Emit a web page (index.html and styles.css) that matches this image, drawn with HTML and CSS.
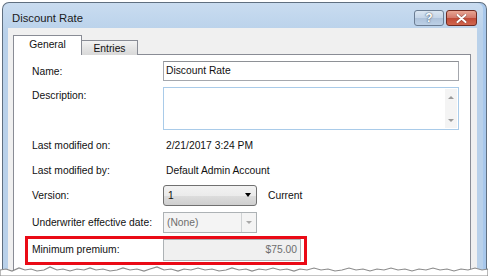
FILE: index.html
```html
<!DOCTYPE html>
<html lang="en">
<head>
  <meta charset="UTF-8" />
  <title>Discount Rate</title>
  <link rel="stylesheet" href="styles.css">
</head>
<body>
  <div class="window">
    <div class="titlebar">
      <span class="title">Discount Rate</span>
      <div class="caption-buttons">
        <div class="cap help">?</div>
        <div class="cap close">
          <svg width="11" height="9" viewBox="0 0 11 9">
            <path d="M1.5 1 L9.5 8 M9.5 1 L1.5 8" stroke="#5a2a22" stroke-width="3.2" stroke-linecap="round" opacity="0.45"/>
            <path d="M1.5 1 L9.5 8 M9.5 1 L1.5 8" stroke="#fff" stroke-width="2" stroke-linecap="round"/>
          </svg>
        </div>
      </div>
    </div>

    <div class="client">
      <div class="tabs">
        <div class="tab active">General</div>
        <div class="tab">Entries</div>
      </div>

      <div class="panel">
        <div class="row r-name">
          <span class="label">Name:</span>
          <div class="textbox wide">Discount Rate</div>
        </div>
        <div class="row r-desc">
          <span class="label">Description:</span>
          <div class="textarea">
            <div class="vscroll">
              <span class="arr up"></span>
              <span class="arr down"></span>
            </div>
          </div>
        </div>
        <div class="row r-on">
          <span class="label">Last modified on:</span>
          <span class="value">2/21/2017 3:24 PM</span>
        </div>
        <div class="row r-by">
          <span class="label">Last modified by:</span>
          <span class="value">Default Admin Account</span>
        </div>
        <div class="row">
          <span class="label">Version:</span>
          <div class="combo">
            <span>1</span>
            <span class="caret"></span>
          </div>
          <span class="note">Current</span>
        </div>
        <div class="row r-date">
          <span class="label">Underwriter effective date:</span>
          <div class="combo disabled">
            <span>(None)</span>
            <span class="drop"><span class="caret"></span></span>
          </div>
        </div>
        <div class="row r-min">
          <div class="highlight">
            <span class="label">Minimum premium:</span>
            <div class="textbox money">$75.00</div>
          </div>
        </div>
      </div>
    </div>
  </div>

  <svg class="torn" width="488" height="12" viewBox="0 0 488 12">
    <path d="M0,6 L6,5 L12,7 L19,4 L25,6 L31,5 L37,7 L44,6 L50,3 L57,6 L63,5 L70,7 L77,5 L84,6 L90,4 L96,6 L103,5 L110,7 L117,6 L123,4 L130,6 L137,5 L144,7 L150,5 L157,3 L164,6 L171,5 L178,7 L184,5 L191,6 L198,4 L205,6 L212,5 L219,7 L226,6 L232,4 L239,6 L246,5 L252,7 L259,5 L266,6 L273,4 L280,6 L287,5 L294,7 L300,5 L307,6 L314,4 L321,6 L328,5 L335,7 L342,6 L349,4 L356,6 L363,5 L370,7 L377,5 L384,6 L391,4 L398,6 L405,5 L412,7 L419,5 L426,6 L433,4 L440,6 L447,5 L454,7 L461,5 L468,6 L475,4 L482,6 L488,5 L488,12 L0,12 Z" fill="#fff" stroke="#8c8c8c" stroke-width="1.2"/>
  </svg>
</body>
</html>
```

FILE: styles.css
```css
html, body {
  margin: 0;
  height: 276px;
  overflow: hidden;
  background: #fff;
}
body {
  position: relative;
  font-family: 'Liberation Sans', Arial, sans-serif;
  font-size: 10.3px;
  color: #111;
}
.window {
  margin: 2px 0 0 2px;
  width: 483px;
  height: 273px;
  border: 1px solid #5f6f80;
  border-bottom: none;
  border-radius: 7px 7px 0 0;
  background: linear-gradient(#c9dcf0, #b9d1ea 30px, #b9d1ea);
  box-shadow: inset -3px 0 0 #a8c8ec, inset -1px 0 0 #d6e6f6;
}
.titlebar {
  height: 25px;
  display: flex;
  justify-content: space-between;
  align-items: flex-start;
  padding: 0 9px 0 9px;
}
.title {
  font-size: 11.3px;
  color: #1b1b1b;
  margin-top: 9px;
}
.caption-buttons {
  display: flex;
  gap: 2px;
  margin-top: 7px;
}
.cap {
  height: 14px;
  border: 1px solid #6a7c92;
  border-radius: 3px;
  display: flex;
  align-items: center;
  justify-content: center;
}
.help {
  width: 28px;
  background: linear-gradient(#dbe6f2, #c4d5e8 50%, #aec2da 51%, #bcd0e6);
  color: #fff;
  font-weight: bold;
  font-size: 12px;
  text-shadow: 0 0 2px #4c5d72, 0 0 1px #4c5d72;
}
.close {
  width: 29px;
  border-color: #6f2b22;
  background: linear-gradient(#e8a593, #d2786a 50%, #c04a36 51%, #d0664e);
}
.client {
  box-sizing: border-box;
  margin: 0 9px 0 5px;
  height: 248px;
  background: #f0f0f0;
  padding: 8px 6px 0 5px;
}
.tabs {
  display: flex;
  align-items: flex-end;
  height: 19px;
  margin-bottom: -1px;
  position: relative;
  z-index: 1;
}
.tab {
  border: 1px solid #898c95;
  border-bottom: none;
  text-align: center;
}
.tab.active {
  width: 67px;
  height: 19px;
  line-height: 18px;
  background: #fff;
}
.tab:not(.active) {
  width: 55px;
  height: 14px;
  line-height: 15px;
  border-left: none;
  background: linear-gradient(#f3f3f3, #e4e4e4 50%, #d9d9d9);
}
.panel {
  box-sizing: border-box;
  border: 1px solid #898c95;
  border-bottom: none;
  background: #fff;
  height: 222px;
  padding: 6px 0 0 18px;
  display: flex;
  flex-direction: column;
  gap: 5px;
}
.row {
  display: flex;
  align-items: center;
  height: 20px;
  flex: none;
}
.label {
  width: 131px;
  flex: none;
}
.value {
  padding-left: 3px;
}
.r-desc {
  height: 44px;
  align-items: flex-start;
}
.r-desc .label {
  margin-top: 4px;
}
.r-on {
  height: 21px;
}
.r-by {
  height: 19px;
}
.r-date {
  height: 24px;
}
.r-min {
  height: 21px;
}
.textbox {
  box-sizing: border-box;
  height: 20px;
  border: 1px solid #a4a7ad;
  border-top-color: #8e9196;
  padding: 0 2px;
  line-height: 18px;
  background: #fff;
}
.wide {
  width: 296px;
}
.textarea {
  box-sizing: border-box;
  width: 296px;
  height: 43px;
  margin-top: 1px;
  border: 1px solid #a9cbe9;
  background: #fff;
  display: flex;
  justify-content: flex-end;
  padding: 1px;
}
.vscroll {
  width: 12px;
  background: #f4f4f4;
  display: flex;
  flex-direction: column;
  justify-content: space-between;
  align-items: center;
  padding: 7px 0 6px;
}
.arr {
  width: 0;
  height: 0;
  border-left: 3.5px solid transparent;
  border-right: 3.5px solid transparent;
}
.arr.up {
  border-bottom: 3px solid #9a9a9a;
}
.arr.down {
  border-top: 3px solid #9a9a9a;
}
.combo {
  box-sizing: border-box;
  width: 94px;
  height: 21px;
  border: 1px solid #707070;
  border-radius: 3px;
  background: linear-gradient(#f2f2f2, #ebebeb 50%, #dddddd 51%, #cfcfcf);
  display: flex;
  align-items: center;
  justify-content: space-between;
  padding: 0 5px 0 4px;
}
.caret {
  width: 0;
  height: 0;
  border-left: 3.5px solid transparent;
  border-right: 3.5px solid transparent;
  border-top: 4px solid #000;
}
.note {
  margin-left: 11px;
}
.combo.disabled {
  border-color: #adb2b5;
  border-radius: 0;
  background: #f4f4f4;
  color: #6d6d6d;
  padding: 0 0 0 3px;
}
.drop {
  width: 14px;
  height: 100%;
  border-left: 1px solid #cfd2d4;
  display: flex;
  align-items: center;
  justify-content: center;
}
.combo.disabled .caret {
  border-top-color: #a8a8a8;
  border-top-width: 3px;
}
.highlight {
  position: relative;
  display: flex;
  align-items: center;
}
.highlight::after {
  content: "";
  position: absolute;
  top: -3px;
  bottom: -4px;
  left: -7px;
  right: -6px;
  border: 3px solid #ea0a16;
  pointer-events: none;
}
.money {
  width: 138px;
  height: 22px;
  line-height: 20px;
  border-color: #adb2b5;
  background: #f0f0f0;
  color: #6d6d6d;
  text-align: right;
  padding-right: 3px;
}
.torn {
  position: absolute;
  left: 0;
  top: 264px;
}
```
